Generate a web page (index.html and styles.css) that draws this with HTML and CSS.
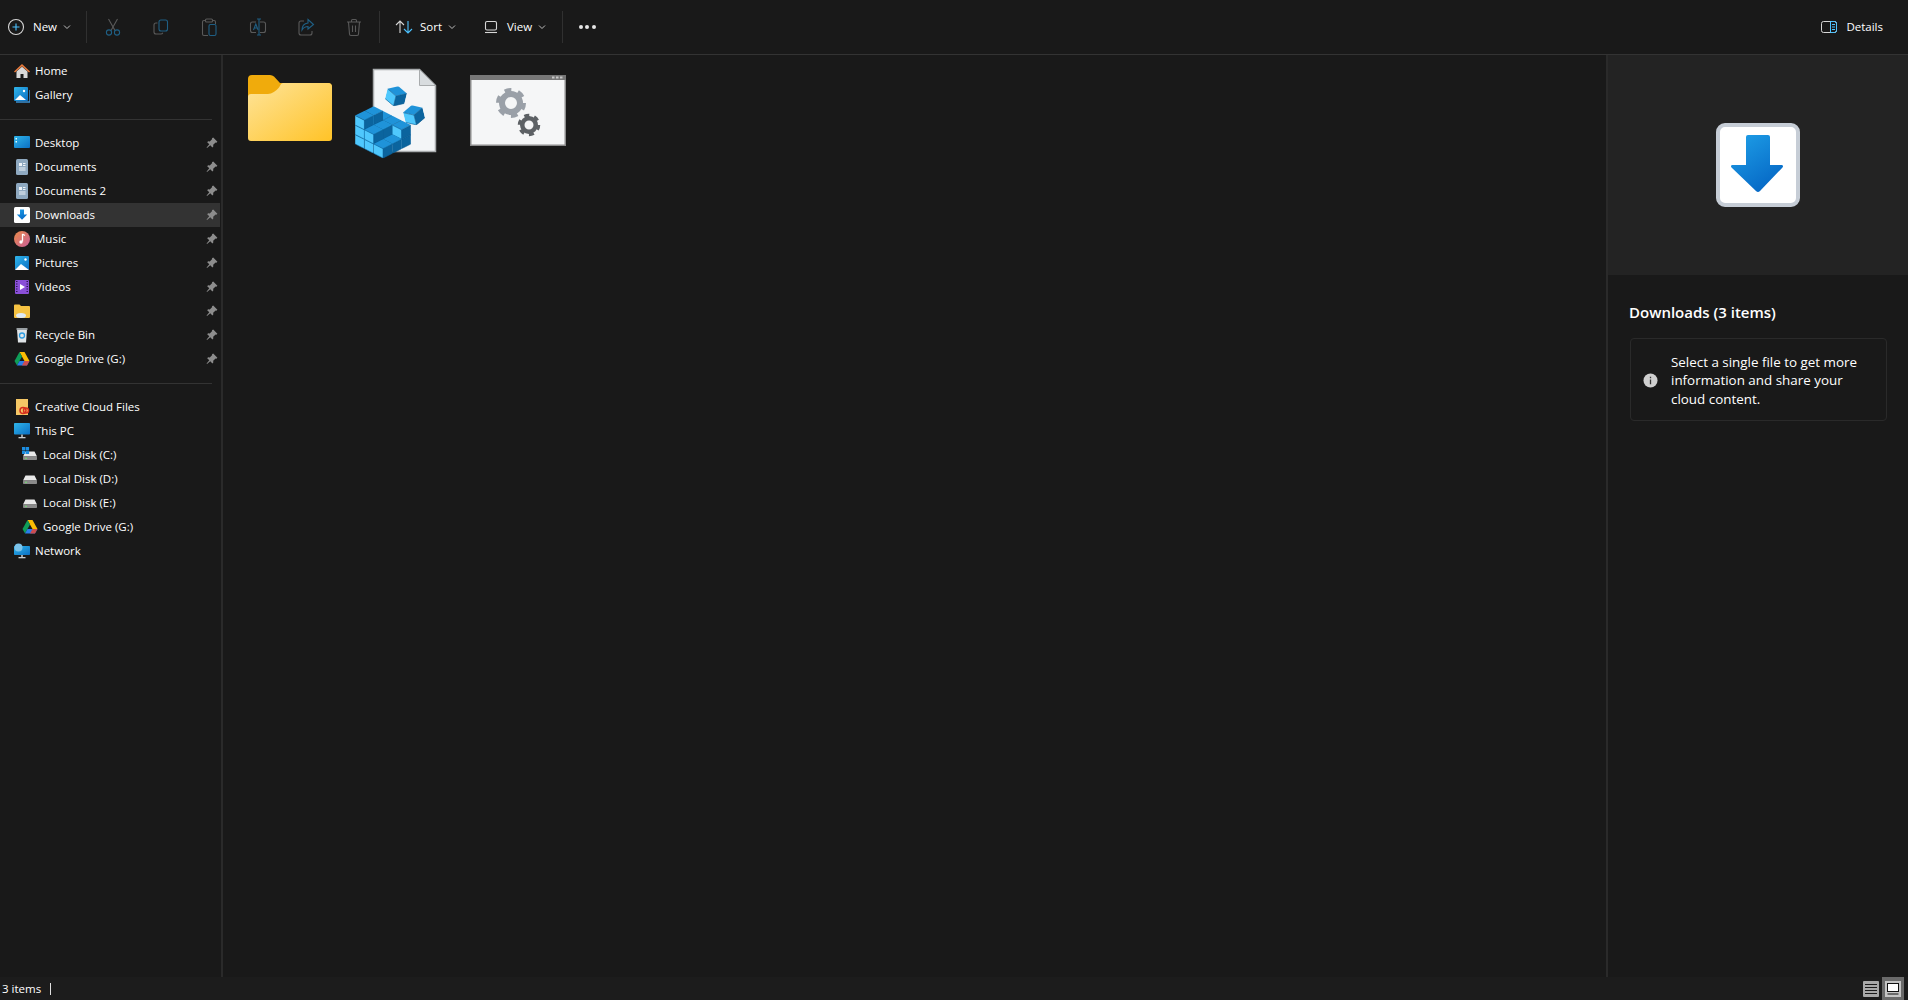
FILE: index.html
```html
<!DOCTYPE html>
<html lang="en">
<head>
<meta charset="utf-8">
<title>Downloads</title>
<link rel="stylesheet" href="styles.css">
</head>
<body>
<svg class="defs" aria-hidden="true">
  <defs>
    <linearGradient id="gFolder" x1="0" y1="0" x2="1" y2="1"><stop offset="0" stop-color="#fee49a"/><stop offset="1" stop-color="#ffc327"/></linearGradient>
    <linearGradient id="gBlue" x1="0" y1="0" x2="0.6" y2="1"><stop offset="0" stop-color="#1fa0e8"/><stop offset="1" stop-color="#0669c6"/></linearGradient>
    <linearGradient id="gSky" x1="0" y1="0" x2="1" y2="1"><stop offset="0" stop-color="#2fb5ea"/><stop offset="1" stop-color="#0b6fc4"/></linearGradient>
    <linearGradient id="gMusic" x1="0" y1="0" x2="1" y2="1"><stop offset="0" stop-color="#ea8a48"/><stop offset="1" stop-color="#c95f9a"/></linearGradient>
    <symbol id="pin" viewBox="0 0 12 12"><path d="M7.200 .6l4.200 4.200-1 .9-.8-.3-2.400 2.400.1 1.700-.9.9-2.100-2.100L1 11l-.4-.4 2.700-3.300-2.100-2.100.9-.9 1.700.1 2.400-2.400-.3-.8z" fill="#8d8d8d"/></symbol>
    <symbol id="chev" viewBox="0 0 8 8"><path d="M1 2.500l3 3 3-3" fill="none" stroke="#bdbdbd" stroke-width="1"/></symbol>
    <symbol id="cube" viewBox="0 0 18.600 18.900"><path d="M9.300 0l9.300 4.700-9.300 4.700L0 4.700z" fill="#1f93d9"/><path d="M0 4.700l9.300 4.700v9.500L0 14.200z" fill="#4fc8fd"/><path d="M18.600 4.700L9.300 9.400v9.500l9.300-4.700z" fill="#0b649e"/><path d="M.2 4.800l9.100 4.600 9.100-4.600M9.300 9.400v9.300M.2 14.200l9.100 4.600 9.100-4.600" fill="none" stroke="#0a5a90" stroke-width=".5"/></symbol>
    <symbol id="dl" viewBox="0 0 16 16"><rect x="0" y="0" width="16" height="16" rx="1.500" fill="#fff"/><path d="M6 2.500h4v5h3.200L8 12.800 2.800 7.500H6z" fill="url(#gBlue)"/></symbol>
    <symbol id="doc" viewBox="0 0 16 16"><rect x="2" y="0" width="12" height="16" rx="1.500" fill="#8fa9c0"/><path d="M5 4h3v3H5zM9 4h2.500v1H9zM9 6h2.500v1H9zM5 8.500h6.500v1H5zM5 10.500h6.500v1H5z" fill="#eef3f8"/></symbol>
    <symbol id="drive" viewBox="0 0 16 16"><path d="M5.500 1h5l5 9h-5z" fill="#fbbc04"/><path d="M5.500 1L.5 10l2.500 4.500L8 5.500z" fill="#0f9d58"/><path d="M3 14.500h10l2.500-4.500H5.500z" fill="#2b7de9"/><path d="M10.500 10h5L13 14.500H8z" fill="#ea4335" opacity=".85"/></symbol>
    <symbol id="disk" viewBox="0 0 16 16"><path d="M3.500 4.500h9L15 9.500H1z" fill="#e8e8e8"/><rect x="1" y="9.500" width="14" height="3.500" rx=".8" fill="#8a8a8a"/><rect x="3" y="10.800" width="2" height="1" fill="#6fe06f"/></symbol>
    <symbol id="gear" viewBox="0 0 32 32"><circle cx="16" cy="16" r="9" fill="none" stroke="currentColor" stroke-width="6"/><circle cx="16" cy="16" r="12.500" fill="none" stroke="currentColor" stroke-width="5" stroke-dasharray="6.500 6.590"/></symbol>
  </defs>
</svg>

<div class="app">
  <header class="toolbar">
    <button class="tb tb-new">
      <svg class="ico20" viewBox="0 0 20 20"><circle cx="10" cy="10" r="7.500" fill="none" stroke="#d6d6d6" stroke-width="1.100"/><path d="M10 6.500v7M6.500 10h7" stroke="#4cc2ff" stroke-width="1.100"/></svg>
      <span>New</span>
      <svg class="chev"><use href="#chev"/></svg>
    </button>
    <i class="tb-sep"></i>
    <div class="tb-group">
      <button class="tb-icon"><svg class="ico20" viewBox="0 0 20 20" fill="none"><path d="M5.500 2l6.500 11.500M14.500 2L8 13.500" stroke="#5a5a5a" stroke-width="1.100"/><circle cx="6" cy="15.500" r="2.600" stroke="#1f5f84" stroke-width="1.100"/><circle cx="14" cy="15.500" r="2.600" stroke="#1f5f84" stroke-width="1.100"/></svg></button>
      <button class="tb-icon"><svg class="ico20" viewBox="0 0 20 20" fill="none"><path d="M6.500 6H5a2 2 0 0 0-2 2v7a2 2 0 0 0 2 2h5a2 2 0 0 0 1.800-1.200" stroke="#5a5a5a" stroke-width="1.100"/><rect x="8" y="3" width="8.500" height="11" rx="2" stroke="#1f5f84" stroke-width="1.100"/></svg></button>
      <button class="tb-icon"><svg class="ico20" viewBox="0 0 20 20" fill="none"><path d="M6 3.500H5a1.500 1.500 0 0 0-1.500 1.500v12A1.500 1.500 0 0 0 5 18.500h4M14 3.500h1A1.500 1.500 0 0 1 16.500 5v2" stroke="#5a5a5a" stroke-width="1.100"/><rect x="6.500" y="2" width="7" height="3" rx="1" stroke="#5a5a5a" stroke-width="1.100"/><rect x="10" y="7.500" width="7" height="11" rx="1.500" stroke="#1f5f84" stroke-width="1.100"/></svg></button>
      <button class="tb-icon"><svg class="ico20" viewBox="0 0 20 20" fill="none"><path d="M8 5H4.500a2 2 0 0 0-2 2v6.500a2 2 0 0 0 2 2H8M12 5h3.500a2 2 0 0 1 2 2v6.500a2 2 0 0 1-2 2H12" stroke="#5a5a5a" stroke-width="1.100"/><path d="M5.500 13l2.300-6 2.300 6M6.300 11h3" stroke="#1f5f84" stroke-width="1.100"/><path d="M11 2v16M9 2h4M9 18h4" stroke="#1f5f84" stroke-width="1.100"/></svg></button>
      <button class="tb-icon"><svg class="ico20" viewBox="0 0 20 20" fill="none"><path d="M8 4H5a2 2 0 0 0-2 2v10a2 2 0 0 0 2 2h9a2 2 0 0 0 2-2v-2" stroke="#5a5a5a" stroke-width="1.100"/><path d="M12 2.500l5.500 5-5.500 4.500V9.500c-3 0-4.500 1-6 3.500 0-4 2-6.500 6-7z" stroke="#1f5f84" stroke-width="1.100"/></svg></button>
      <button class="tb-icon"><svg class="ico20" viewBox="0 0 20 20" fill="none"><path d="M3 5h14M7.500 5V3.500a1 1 0 0 1 1-1h3a1 1 0 0 1 1 1V5M4.500 5l1 12a1.500 1.500 0 0 0 1.500 1.500h6a1.500 1.500 0 0 0 1.500-1.500l1-12M8.500 8.500v6.500M11.500 8.500v6.500" stroke="#5a5a5a" stroke-width="1.100"/></svg></button>
    </div>
    <i class="tb-sep"></i>
    <button class="tb tb-sort">
      <svg class="ico20" viewBox="0 0 20 20" fill="none"><path d="M6 16V4M2 8l4-4 4 4" stroke="#d6d6d6" stroke-width="1.100"/><path d="M14 4v12M10 12l4 4 4-4" stroke="#4cc2ff" stroke-width="1.100"/></svg>
      <span>Sort</span>
      <svg class="chev"><use href="#chev"/></svg>
    </button>
    <button class="tb tb-view">
      <svg class="ico20" viewBox="0 0 20 20" fill="none"><rect x="4.500" y="4.500" width="11" height="8.500" rx="1.500" stroke="#d6d6d6" stroke-width="1.100"/><path d="M4 15.500h12" stroke="#d6d6d6" stroke-width="1.100"/></svg>
      <span>View</span>
      <svg class="chev"><use href="#chev"/></svg>
    </button>
    <i class="tb-sep"></i>
    <button class="tb-more"><b></b><b></b><b></b></button>
    <button class="tb tb-details">
      <svg class="ico18" viewBox="0 0 18 14" fill="none"><rect x="1.500" y="1.500" width="15" height="11" rx="2" stroke="#d6d6d6"/><path d="M10.500 1.500h4a2 2 0 0 1 2 2v7a2 2 0 0 1-2 2h-4z" stroke="#4cc2ff"/><path d="M12 4.500h3M12 7h3M12 9.500h3" stroke="#4cc2ff"/></svg>
      <span>Details</span>
    </button>
  </header>

  <div class="main">
    <nav class="sidebar">
      <a class="row"><svg class="ni" viewBox="0 0 16 16"><path d="M8 1L0 8.500l1 1L8 3.200l7 6.300 1-1z" fill="#e8793a"/><path d="M2.500 8.500L8 3.800l5.500 4.700V15h-4v-4h-3v4h-4z" fill="#d9d9d9"/></svg><span>Home</span></a>
      <a class="row"><svg class="ni" viewBox="0 0 16 16"><rect x="0" y="0" width="14" height="14" rx="1" fill="url(#gSky)"/><path d="M2 15h14V3" fill="none" stroke="#3a8fd0" stroke-width="1.500"/><path d="M1 13l5-5 6 5z" fill="#fff"/><circle cx="10" cy="4" r="1.200" fill="#fff"/></svg><span>Gallery</span></a>
      <hr class="div">
      <a class="row pinned"><svg class="ni" viewBox="0 0 16 16"><rect y="1" width="16" height="12" rx="1" fill="url(#gSky)"/><rect x="1.500" y="3" width="1.500" height="1.500" fill="#dff"/><rect x="1.500" y="6" width="1.500" height="1.500" fill="#dff"/></svg><span>Desktop</span><svg class="pin"><use href="#pin"/></svg></a>
      <a class="row pinned"><svg class="ni"><use href="#doc"/></svg><span>Documents</span><svg class="pin"><use href="#pin"/></svg></a>
      <a class="row pinned"><svg class="ni"><use href="#doc"/></svg><span>Documents 2</span><svg class="pin"><use href="#pin"/></svg></a>
      <a class="row pinned active"><svg class="ni"><use href="#dl"/></svg><span>Downloads</span><svg class="pin"><use href="#pin"/></svg></a>
      <a class="row pinned"><svg class="ni" viewBox="0 0 16 16"><circle cx="8" cy="8" r="8" fill="url(#gMusic)"/><path d="M8.500 3v7.500M8.500 3l2.500 1.500" stroke="#fff" stroke-width="1.300" fill="none"/><circle cx="7" cy="11" r="1.700" fill="#fff"/></svg><span>Music</span><svg class="pin"><use href="#pin"/></svg></a>
      <a class="row pinned"><svg class="ni" viewBox="0 0 16 16"><rect x="1" y="1" width="14" height="14" rx="1" fill="url(#gSky)"/><path d="M1 15l6-6 8 6z" fill="#fff"/><circle cx="11.500" cy="4.500" r="1.200" fill="#fff"/></svg><span>Pictures</span><svg class="pin"><use href="#pin"/></svg></a>
      <a class="row pinned"><svg class="ni" viewBox="0 0 16 16"><rect x="1" y="1" width="14" height="14" rx="1" fill="#8a4fd8"/><path d="M6 5l5 3-5 3z" fill="#fff"/><path d="M2 2.500h1.500M2 5h1.500M2 7.500h1.500M2 10h1.500M2 12.500h1.500M12.500 2.500H14M12.500 5H14M12.500 7.500H14M12.500 10H14M12.500 12.500H14" stroke="#2a1650"/></svg><span>Videos</span><svg class="pin"><use href="#pin"/></svg></a>
      <a class="row pinned"><svg class="ni" viewBox="0 0 16 16"><path d="M0 2.500A1 1 0 0 1 1 1.500h4.500l1.500 1.500h8a1 1 0 0 1 1 1v10a1 1 0 0 1-1 1H1a1 1 0 0 1-1-1z" fill="#f5c242"/><ellipse cx="7" cy="12.500" rx="5" ry="2.500" fill="#dfeaf5"/></svg><span></span><svg class="pin"><use href="#pin"/></svg></a>
      <a class="row pinned"><svg class="ni" viewBox="0 0 16 16"><path d="M3 2.500h10l-1 13H4z" fill="#dfe3e6"/><rect x="2.500" y="1" width="11" height="2" rx=".6" fill="#9aa0a4"/><circle cx="8" cy="8.500" r="2.500" fill="none" stroke="#2b9be0" stroke-width="1.300"/></svg><span>Recycle Bin</span><svg class="pin"><use href="#pin"/></svg></a>
      <a class="row pinned"><svg class="ni"><use href="#drive"/></svg><span>Google Drive (G:)</span><svg class="pin"><use href="#pin"/></svg></a>
      <hr class="div">
      <a class="row"><svg class="ni" viewBox="0 0 16 16"><rect x="2" y="0" width="12" height="16" fill="#f5c766"/><circle cx="9" cy="11.500" r="3" fill="none" stroke="#d6301f" stroke-width="1.500"/><circle cx="12" cy="11.500" r="2.500" fill="none" stroke="#d6301f" stroke-width="1.500"/></svg><span>Creative Cloud Files</span></a>
      <a class="row"><svg class="ni" viewBox="0 0 16 16"><rect y="0" width="16" height="11.500" rx=".8" fill="url(#gSky)"/><rect x="7" y="11.500" width="2" height="3" fill="#9aa0a4"/><rect x="4.500" y="14" width="7" height="1.300" fill="#c8ccd0"/></svg><span>This PC</span></a>
      <a class="row sub"><svg class="ni" viewBox="0 0 16 16"><use href="#disk" width="16" height="16"/><path d="M0 0h3.300v3.300H0zM3.800 0h3.300v3.300H3.800zM0 3.800h3.300v3.300H0zM3.800 3.800h3.300v3.300H3.800z" fill="#1c8de0"/></svg><span>Local Disk (C:)</span></a>
      <a class="row sub"><svg class="ni"><use href="#disk"/></svg><span>Local Disk (D:)</span></a>
      <a class="row sub"><svg class="ni"><use href="#disk"/></svg><span>Local Disk (E:)</span></a>
      <a class="row sub"><svg class="ni"><use href="#drive"/></svg><span>Google Drive (G:)</span></a>
      <a class="row"><svg class="ni" viewBox="0 0 16 16"><rect y="3" width="16" height="9" rx=".8" fill="url(#gSky)"/><rect x="7" y="12" width="2" height="2.500" fill="#9aa0a4"/><rect x="4.500" y="14" width="7" height="1.300" fill="#c8ccd0"/><circle cx="4.500" cy="4.500" r="4" fill="#7cc3ea"/></svg><span>Network</span></a>
    </nav>

    <section class="files">
      <div class="tile">
        <svg class="thumb" viewBox="0 0 115 100">
          <path d="M8 19a4 4 0 0 1 4-4h18a6 6 0 0 1 4 1.500l6 6.500h48a4 4 0 0 1 4 4v12H8z" fill="#f0ab0c"/>
          <path d="M8 37a3 3 0 0 1 3-3h17c4 0 8-3 11-6.500 1-1.500 2-4.500 4-4.500h45a4 4 0 0 1 4 4v51a3 3 0 0 1-3 3H11a3 3 0 0 1-3-3z" fill="url(#gFolder)"/>
        </svg>
      </div>
      <div class="tile">
        <svg class="thumb" viewBox="0 0 115 100">
          <path d="M18.500 9.500h46l16 16v66h-62z" fill="#f3f5f7" stroke="#a8abad" stroke-width="1.500"/>
          <path d="M64.500 9.500v16h16z" fill="#d8dcdf" stroke="#a8abad" stroke-width="1"/>
          <use href="#cube" x="31" y="26" width="20" height="20.300" transform="rotate(14 41 36)"/>
          <use href="#cube" x="49" y="45" width="20" height="20.300" transform="rotate(-14 59 55)"/>
          <use href="#cube" x="18.700" y="60.500" width="18.600" height="18.900"/>
          <use href="#cube" x="18.700" y="51" width="18.600" height="18.900"/>
          <use href="#cube" x="28" y="65.200" width="18.600" height="18.900"/>
          <use href="#cube" x="28" y="55.700" width="18.600" height="18.900"/>
          <use href="#cube" x="9.400" y="65.200" width="18.600" height="18.900"/>
          <use href="#cube" x="9.400" y="55.700" width="18.600" height="18.900"/>
          <use href="#cube" x="9.400" y="46.200" width="18.600" height="18.900"/>
          <use href="#cube" x="37.300" y="69.900" width="18.600" height="18.900"/>
          <use href="#cube" x="37.300" y="60.400" width="18.600" height="18.900"/>
          <use href="#cube" x="18.700" y="69.900" width="18.600" height="18.900"/>
          <use href="#cube" x="18.700" y="60.400" width="18.600" height="18.900"/>
          <use href="#cube" x=".1" y="69.900" width="18.600" height="18.900"/>
          <use href="#cube" x=".1" y="60.400" width="18.600" height="18.900"/>
          <use href="#cube" x=".1" y="50.900" width="18.600" height="18.900"/>
          <use href="#cube" x="28" y="74.600" width="18.600" height="18.900"/>
          <use href="#cube" x="9.400" y="74.600" width="18.600" height="18.900"/>
          <use href="#cube" x="9.400" y="65.100" width="18.600" height="18.900"/>
          <use href="#cube" x="18.700" y="79.300" width="18.600" height="18.900"/>
        </svg>
      </div>
      <div class="tile">
        <svg class="thumb" viewBox="0 0 115 100">
          <rect x=".750" y="15.750" width="94.500" height="69.500" fill="#f5f6f7" stroke="#8a8a8a" stroke-width="1.500"/>
          <rect x="0" y="15" width="96" height="5" fill="#777"/>
          <path d="M82 16.500h2.500v2H82zM86 16.500h2.500v2H86zM90 16.500h2.500v2H90z" fill="#c8c8c8"/>
          <use href="#gear" x="25" y="27" width="32" height="32" class="g1"/>
          <use href="#gear" x="47" y="53" width="24" height="24" class="g2"/>
        </svg>
      </div>
    </section>

    <aside class="details">
      <div class="preview"><svg class="big" viewBox="0 0 84 84">
        <rect x="2" y="2" width="80" height="80" rx="7" fill="#fff" stroke="#c6cdd6" stroke-width="4"/>
        <path d="M33 14a2 2 0 0 1 2-2h20a2 2 0 0 1 2 2v28h11.500c1.500 0 2 1.500 1 2.500L47 68a2.800 2.800 0 0 1-4 0L18.500 44.500c-1-1-.5-2.500 1-2.500H33z" fill="url(#gBlue)" transform="translate(-3 0)"/>
      </svg></div>
      <div class="info">
        <h2>Downloads (3 items)</h2>
        <div class="card">
          <svg class="i" viewBox="0 0 16 16"><circle cx="8" cy="8" r="7.500" fill="#cfcfcf"/><path d="M7.300 7h1.400v5H7.300zM7.300 4h1.400v1.500H7.300z" fill="#333"/></svg>
          <p>Select a single file to get more information and share your cloud content.</p>
        </div>
      </div>
    </aside>
  </div>

  <footer class="status">
    <span class="count">3 items</span><i class="bar"></i>
    <div class="modes">
      <span class="mode"><svg viewBox="0 0 16 16" width="16" height="16"><rect width="16" height="16" rx="1" fill="#a8a8a8"/><path d="M2 3.500h12M2 6.500h12M2 9.500h12M2 12.500h12" stroke="#1a1a1a" stroke-width="1.200"/></svg></span>
      <span class="mode on"><svg viewBox="0 0 16 16" width="16" height="16"><rect width="16" height="16" fill="#c4c4c4"/><rect x="2.500" y="2.500" width="11" height="8" fill="#fff" stroke="#111"/><path d="M2.500 13h11" stroke="#111"/></svg></span>
    </div>
  </footer>
</div>
</body>
</html>
```

FILE: styles.css
```css
* { box-sizing: border-box; }
html, body { height: 100%; }
body {
  margin: 0;
  background: #191919;
  color: #fff;
  font-family: "Open Sans", "Noto Sans", sans-serif;
  font-size: 11.500px;
  overflow: hidden;
}
.defs { position: absolute; width: 0; height: 0; }
.app { display: flex; flex-direction: column; height: 1000px; }

/* toolbar */
.toolbar {
  flex: 0 0 55px;
  display: flex;
  align-items: center;
  background: #191919;
  border-bottom: 1px solid #333;
  padding: 0 25px 0 0;
}
button {
  background: none;
  border: 0;
  color: inherit;
  font: inherit;
  padding: 0;
  display: flex;
  align-items: center;
}
.tb { height: 32px; flex: none; }
.tb span { line-height: 1; font-size: 11.500px; }
.ico20 { width: 20px; height: 20px; flex: none; }
.ico18 { width: 18px; height: 14px; flex: none; }
.chev { width: 8px; height: 8px; flex: none; margin-left: 6px; }
.tb-new { padding-left: 6px; width: 86px; }
.tb-new span { margin-left: 7px; }
.tb-sep { flex: none; width: 1px; height: 32px; background: #303030; }
.tb-group { flex: none; display: flex; padding-left: 2px; width: 292px; }
.tb-icon { width: 48.200px; height: 32px; justify-content: center; flex: none; }
.tb-sort { padding-left: 14px; width: 90px; }
.tb-sort span { margin-left: 6px; }
.tb-view { padding-left: 11px; width: 92px; }
.tb-view span { margin-left: 6px; }
.tb-more { flex: none; width: 48px; height: 32px; justify-content: center; gap: 2.500px; margin-right: auto; }
.tb-more b { width: 4px; height: 4px; border-radius: 50%; background: #e6e6e6; }
.tb-details span { margin-left: 8px; }

/* main area */
.main { flex: 1; display: flex; min-height: 0; }

.sidebar {
  flex: 0 0 223px;
  border-right: 2px solid #2a2a2a;
  padding-top: 4px;
}
.row {
  display: flex;
  align-items: center;
  height: 24px;
  padding-left: 14px;
  width: 220px;
  line-height: 1;
}
.row span { margin-left: 5px; flex: 1; white-space: nowrap; }
.row.sub { padding-left: 22px; }
.row.active { background: #333; }
.ni { width: 16px; height: 16px; flex: none; }
.pin { width: 12px; height: 12px; flex: none; margin-right: 2px; }
.div {
  border: 0;
  height: 1px;
  background: #333;
  margin: 12px 0 11px;
  width: 212px;
}

.files {
  flex: 1;
  display: flex;
  align-items: flex-start;
  padding: 5px 0 0 17px;
}
.tile { flex: none; width: 115px; }
.thumb { display: block; width: 115px; height: 100px; }
.g1 { color: #9aa0a8; }
.g2 { color: #5d6165; }

.details {
  flex: 0 0 302px;
  border-left: 2px solid #2a2a2a;
  display: flex;
  flex-direction: column;
}
.preview {
  flex: 0 0 220px;
  background: #232323;
  display: flex;
  align-items: center;
  justify-content: center;
}
.big { width: 84px; height: 84px; display: block; }
.info { padding: 27px 21px 0 21px; }
h2 {
  margin: 0 0 15px;
  font-size: 15px;
  font-weight: 600;
  line-height: 21px;
  white-space: nowrap;
}
.card {
  display: flex;
  align-items: center;
  height: 83px;
  margin-left: 1px;
  border: 1px solid #2a2a2a;
  border-radius: 4px;
  padding: 2px 12px 0;
  gap: 13px;
}
.i { width: 15px; height: 15px; flex: none; }
.card p { margin: 0; font-size: 13.400px; line-height: 18.500px; }

/* status bar */
.status {
  flex: 0 0 23px;
  display: flex;
  align-items: center;
  background: #1c1c1c;
  padding-left: 2px;
}
.bar { flex: none; width: 1px; height: 12px; background: #e0e0e0; margin-left: 9px; }
.modes { margin-left: auto; display: flex; align-items: center; height: 100%; padding-right: 4px; }
.mode { width: 16px; margin-right: 3px; height: 23px; display: flex; align-items: center; justify-content: center; }
.mode.on { width: 22px; margin-right: 0; background: #6a6a6a; }
```
